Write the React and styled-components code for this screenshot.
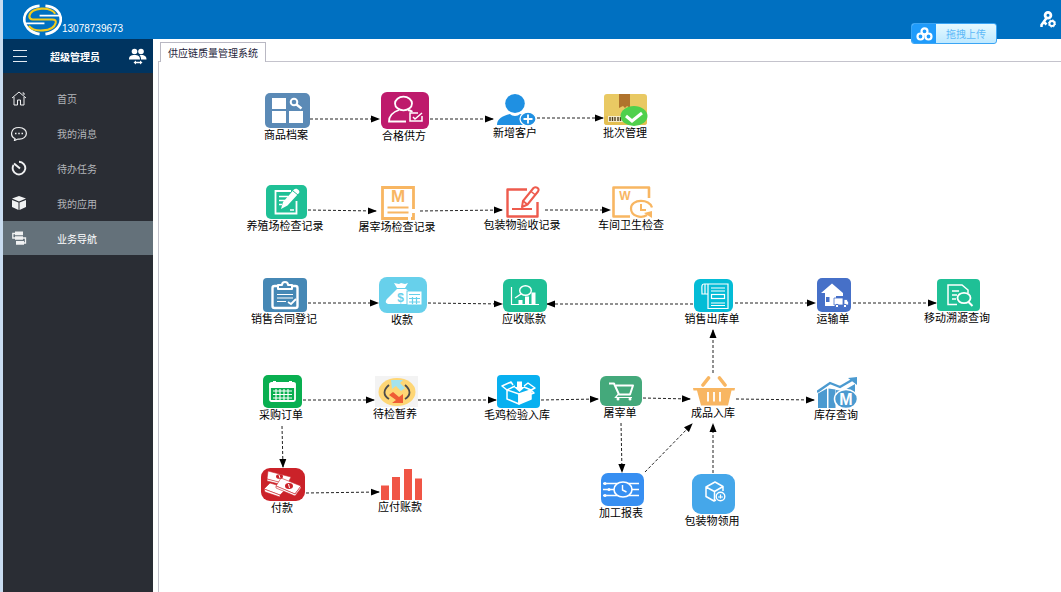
import { useState } from 'react'
import styled, { createGlobalStyle } from 'styled-components'

const FONT = '"Noto Sans CJK SC", "Liberation Sans", sans-serif'

const menu = [
  { id: 'home', name: '首页' },
  { id: 'messages', name: '我的消息' },
  { id: 'todo', name: '待办任务' },
  { id: 'apps', name: '我的应用' },
  { id: 'flow', name: '业务导航' },
]

// x is the middle of the node, y its top edge, w and h the icon size
const nodes = [
  { id: 'goods', label: '商品档案', x: 126, y: 31, w: 45, h: 35 },
  { id: 'supplier', label: '合格供方', x: 244, y: 30, w: 48, h: 37 },
  { id: 'customer', label: '新增客户', x: 355, y: 32, w: 40, h: 32 },
  { id: 'batch', label: '批次管理', x: 465, y: 32, w: 44, h: 32 },
  { id: 'farm', label: '养殖场检查记录', x: 125, y: 123, w: 41, h: 34 },
  { id: 'slaughterCheck', label: '屠宰场检查记录', x: 237, y: 124, w: 34, h: 34 },
  { id: 'packCheck', label: '包装物验收记录', x: 362, y: 124, w: 34, h: 32 },
  { id: 'workshop', label: '车间卫生检查', x: 471, y: 124, w: 41, h: 32 },
  { id: 'contract', label: '销售合同登记', x: 124, y: 216, w: 44, h: 34 },
  { id: 'receipt', label: '收款', x: 242, y: 215, w: 48, h: 36 },
  { id: 'receivable', label: '应收账款', x: 364, y: 217, w: 44, h: 33 },
  { id: 'outbound', label: '销售出库单', x: 552, y: 217, w: 39, h: 33 },
  { id: 'transport', label: '运输单', x: 673, y: 216, w: 34, h: 34 },
  { id: 'trace', label: '移动溯源查询', x: 797, y: 217, w: 43, h: 32 },
  { id: 'purchase', label: '采购订单', x: 121, y: 313, w: 39, h: 33 },
  { id: 'holding', label: '待检暂养', x: 235, y: 314, w: 43, h: 31 },
  { id: 'inbound', label: '毛鸡检验入库', x: 357, y: 313, w: 43, h: 33 },
  { id: 'slaughter', label: '屠宰单', x: 460, y: 314, w: 42, h: 30 },
  { id: 'finished', label: '成品入库', x: 553, y: 314, w: 42, h: 30 },
  { id: 'stock', label: '库存查询', x: 676, y: 315, w: 41, h: 31 },
  { id: 'payment', label: '付款', x: 122, y: 406, w: 44, h: 33 },
  { id: 'payable', label: '应付账款', x: 240, y: 406, w: 41, h: 32 },
  { id: 'report', label: '加工报表', x: 461, y: 411, w: 43, h: 33 },
  { id: 'packUse', label: '包装物领用', x: 552, y: 412, w: 43, h: 40 },
]

// x1, y1, x2, y2 with the arrow head at the second point
const edges = [
  [150, 57, 219, 57],
  [270, 57, 333, 57],
  [377, 56, 443, 56],
  [148, 148, 216, 149],
  [260, 149, 342, 148],
  [385, 148, 450, 148],
  [148, 241, 218, 241],
  [268, 241, 342, 242],
  [533, 242, 387, 242],
  [575, 241, 655, 241],
  [693, 241, 776, 241],
  [143, 338, 214, 338],
  [258, 338, 336, 338],
  [381, 338, 438, 337],
  [483, 336, 530, 337],
  [576, 337, 654, 338],
  [122, 364, 123, 405],
  [146, 431, 219, 430],
  [461, 361, 462, 410],
  [485, 410, 532, 362],
  [553, 311, 553, 268],
  [553, 411, 553, 362],
]

const Tile = ({ w, h, r = 6, fill }) => <rect width={w} height={h} rx={r} fill={fill} />

const art = {
  goods: (
    <>
      <Tile w={45} h={35} r={5} fill="#5b8ab6" />
      <g fill="#fff">
        <rect x="7" y="5" width="14" height="11" />
        <rect x="7" y="18" width="14" height="12" />
        <rect x="24" y="18" width="14" height="12" />
      </g>
      <circle cx="29" cy="9" r="3.3" fill="none" stroke="#fff" strokeWidth="2" />
      <path d="M31.500 11.500l5 4" stroke="#fff" strokeWidth="2.500" />
    </>
  ),
  supplier: (
    <>
      <Tile w={48} h={37} fill="#be1a6c" />
      <g fill="none" stroke="#fff" strokeWidth="1.800">
        <ellipse cx="22.500" cy="11.500" rx="8.500" ry="6.800" />
        <path d="M25 29.500H8c0-6 4-9.500 10-11.500M27 18c2 .4 3 .8 4.500 1.800" />
        <path d="M37 21h-8v8h12v-5" strokeWidth="1.500" />
        <path d="M32 25l2 2 7-6" strokeWidth="1.500" />
      </g>
    </>
  ),
  customer: (
    <>
      <ellipse cx="19" cy="9.500" rx="9.800" ry="9.500" fill="#1f90e2" />
      <path d="M1 31c0-6 5-9 13-11 2 2.500 8 2.500 10 0l6 2v9z" fill="#1f90e2" />
      <ellipse cx="32" cy="25" rx="8" ry="6.800" fill="#1f90e2" stroke="#fff" strokeWidth="1.200" />
      <path d="M27.500 25h9M32 20.500v9" stroke="#fff" strokeWidth="1.800" />
    </>
  ),
  batch: (
    <>
      <rect width="43" height="31" rx="3" fill="#e9c963" />
      <rect y="22" width="43" height="9" rx="3" fill="#e4bf52" />
      <path d="M15 0h11v14l-3-2-2 2-2-2-4 2z" fill="#b0732c" />
      <rect x="4" y="22" width="16" height="6" fill="#f6eccb" />
      <path d="M6 23v4M8.500 23v4M11 23v4M14 23v4M16.500 23v4" stroke="#4b3b20" strokeWidth="1.400" />
      <ellipse cx="30" cy="22" rx="13.500" ry="10" fill="#4fd04c" />
      <path d="M22 22l6 5 10-8" fill="none" stroke="#fff" strokeWidth="3" />
    </>
  ),
  farm: (
    <>
      <Tile w={41} h={34} r={5} fill="#1fc096" />
      <path d="M25 6H9.500v22.500h21V16" fill="none" stroke="#fff" strokeWidth="1.800" />
      <path d="M13 11.500h9M13 15.500h6M13 19.500h3M24 25h4" stroke="#fff" strokeWidth="1.400" />
      <path d="M15 24l2-7L28 4.500c2-2.500 7 1 5 3.500L21.500 20.500z" fill="#fff" />
      <path d="M27 6l5 4" stroke="#1fc096" strokeWidth="1" />
    </>
  ),
  slaughterCheck: (
    <>
      <path d="M32.500 23V1.500h-31v31H27M32.500 27v5.500H30" fill="none" stroke="#f8b662" strokeWidth="2.800" />
      <text x="17" y="16" fontSize="17" fontWeight="700" fontFamily="Liberation Sans" textAnchor="middle" fill="#f8b662">M</text>
      <path d="M6.500 21.500h21M6.500 26.500h21" stroke="#f8b662" strokeWidth="2.200" />
    </>
  ),
  packCheck: (
    <>
      <path d="M21 3.500H1.500v27h30V16" fill="none" stroke="#ee5b4d" strokeWidth="2.400" strokeLinejoin="round" />
      <path d="M6 23h20" stroke="#ee5b4d" strokeWidth="2" />
      <path d="M16 21l1-6L27.500 2c2.500-2 6.500.5 4.500 3.500L21.500 18.500z" fill="#fff" stroke="#ee5b4d" strokeWidth="2" strokeLinejoin="round" />
      <path d="M24.500 5l5 4M17 15l4.500 3.500" stroke="#ee5b4d" strokeWidth="1.600" />
    </>
  ),
  workshop: (
    <>
      <path d="M37 12V1.500H1.500v29H18" fill="none" stroke="#f8b662" strokeWidth="2.600" strokeLinejoin="round" />
      <text x="13" y="14" fontSize="12" fontWeight="700" fontFamily="Liberation Sans" textAnchor="middle" fill="#f8b662">W</text>
      <path d="M35 29c-6 4-16 1-16-6.500 0-10 19-10 21-1" fill="none" stroke="#f8b662" strokeWidth="2.200" />
      <path d="M29 18v6h5" fill="none" stroke="#f8b662" strokeWidth="2" />
      <path d="M32 27l8-2v7z" fill="#f8b662" />
    </>
  ),
  contract: (
    <>
      <Tile w={44} h={34} r={4} fill="#4688b5" />
      <rect x="9.500" y="8" width="25" height="22" rx="2" fill="none" stroke="#fff" strokeWidth="2.400" />
      <path d="M15 11V7h4c0-4 6-4 6 0h4v4z" fill="#4688b5" stroke="#fff" strokeWidth="2" strokeLinejoin="round" />
      <path d="M14 16.500h16M14 20h16M14 23.500h9" stroke="#fff" strokeWidth="1.200" />
      <path d="M25 24l3 2 5-5" fill="none" stroke="#fff" strokeWidth="1.800" />
    </>
  ),
  receipt: (
    <>
      <Tile w={48} h={36} r={8} fill="#67d0eb" />
      <path d="M15 6l5 1 2-1 4 1 3-1-3 5h-8z" fill="#fff" />
      <path d="M18 12h9c4 3 6 6 6 10 0 4-2 5-6 5H9c-3-1-3-3 0-6z" fill="#fff" />
      <text x="21.500" y="24.500" fontSize="12" fontWeight="700" fontFamily="Liberation Sans" textAnchor="middle" fill="#67d0eb">$</text>
      <rect x="28" y="14" width="15" height="14" fill="#fff" stroke="#67d0eb" strokeWidth="1" />
      <path d="M30 17.500h11M30 21.500h11M30 25h11M33.500 20v7M37.500 20v7" stroke="#67d0eb" strokeWidth="1.200" />
    </>
  ),
  receivable: (
    <>
      <Tile w={44} h={33} fill="#1fc096" />
      <path d="M8.500 8v17.500H36" fill="none" stroke="#fff" strokeWidth="1.200" />
      <ellipse cx="22.500" cy="11.500" rx="5.800" ry="4.800" fill="none" stroke="#fff" strokeWidth="1.400" />
      <path d="M18 15l-6 4" stroke="#fff" strokeWidth="1.400" />
      <path d="M15.500 21h4v4h-4zM22 17.500h4V25h-4zM28.500 13.500h4V25h-4z" fill="#fff" />
    </>
  ),
  outbound: (
    <>
      <Tile w={39} h={33} fill="#04bcd6" />
      <g fill="none" stroke="#fff" strokeWidth="1.200">
        <path d="M14 5v24.500h20V5H10c-3 0-2 4-2 10h6" />
        <path d="M17 9h14M17 12h14M17 24h14M17 26.500h14" />
        <rect x="17.500" y="15.500" width="13" height="4" />
        <path d="M11 5v10" />
      </g>
    </>
  ),
  transport: (
    <>
      <Tile w={34} h={34} r={5} fill="#4670c8" />
      <path d="M4 15L15 5.500 26 15v3h-7v10H8V15z" fill="#fff" />
      <rect x="9" y="19" width="3.500" height="5" fill="#4670c8" />
      <path d="M17 20h9v7h-9zM27 21.500h3l1.500 3V27H27z" fill="#fff" stroke="#4670c8" strokeWidth=".8" />
      <circle cx="20" cy="28" r="1.700" fill="#fff" stroke="#4670c8" />
      <circle cx="28" cy="28" r="1.700" fill="#fff" stroke="#4670c8" />
    </>
  ),
  trace: (
    <>
      <Tile w={43} h={32} r={4} fill="#1fc096" />
      <g fill="none" stroke="#fff" strokeWidth="1.500">
        <path d="M20 25.500h-9V6h14l6 5v3" />
        <path d="M15 12h7M15 16h5M15 20h4" />
        <ellipse cx="27" cy="19" rx="6.500" ry="5.200" strokeWidth="1.800" />
        <path d="M31.500 23l4 4" strokeWidth="2" />
      </g>
    </>
  ),
  purchase: (
    <>
      <Tile w={39} h={33} r={5} fill="#09af50" />
      <rect x="7" y="8" width="25" height="18" rx="1.500" fill="none" stroke="#fff" strokeWidth="1.800" />
      <path d="M6.500 8h26v5h-26z" fill="#fff" />
      <path d="M11.500 6v4M27.500 6v4" stroke="#fff" strokeWidth="3" />
      <path d="M10 16h19M10 19.500h19M10 23h19M13 14v11M17 14v11M21 14v11M25 14v11" stroke="#fff" strokeWidth="1.100" />
    </>
  ),
  holding: (
    <>
      <rect width="43" height="31" fill="#f3f3f3" />
      <ellipse cx="22" cy="16" rx="18.500" ry="14" fill="#fed675" />
      <path d="M14 9c-6 5-6 10 0 14M30 9c6 5 6 10 0 14" fill="none" stroke="#4b4b4b" strokeWidth="1.800" />
      <path d="M16 4h12l-3 3 5 5-4 3-5-5-4 3z" fill="#a4e3ee" />
      <path d="M14 19l4-3 6 5 4-3v9H17l4-3z" fill="#ef5c35" />
    </>
  ),
  inbound: (
    <>
      <Tile w={43} h={33} r={4} fill="#08b0f0" />
      <g fill="none" stroke="#fff" strokeWidth="1.500" strokeLinejoin="round">
        <path d="M10 15v9l12 5V19z" />
        <path d="M22 19l12-4v9l-12 5z" fill="#fff" />
        <path d="M10 15l-5-4 9-4 2 3M34 15l4-2-7-5-4 3M10 15l8-4M34 15l-7-3M22 19l3 3 12-4-3-3" />
      </g>
      <path d="M20 6.500h5V12h3l-5.500 5-5.500-5h3z" fill="#fff" />
    </>
  ),
  slaughter: (
    <>
      <Tile w={42} h={30} r={6} fill="#44a97b" />
      <path d="M9 7.500h5l5 11h11l3-9H16" fill="none" stroke="#fff" strokeWidth="2" strokeLinejoin="round" />
      <path d="M18.500 18l-3 3.500H32" fill="none" stroke="#fff" strokeWidth="1.200" />
      <circle cx="18" cy="23" r="1.500" fill="#fff" />
      <circle cx="30" cy="23" r="1.500" fill="#fff" />
    </>
  ),
  finished: (
    <>
      <path d="M15.500 2L10 9M26.500 2L32 9" stroke="#f8b662" strokeWidth="3.600" strokeLinecap="round" />
      <path d="M0 12h42l-.5 2.500H38.500L35 29.500H8L4 14.500H.5z" fill="#f8b662" />
      <path d="M15 16v9.500M21 16v9.500M27 16v9.500" stroke="#fff" strokeWidth="1.800" />
    </>
  ),
  stock: (
    <>
      <path d="M1 16.500l9-5v19.500H1zM11.500 11.500l7 1v18.500h-7z" fill="#4b9ad0" />
      <path d="M0 15L13 6l10 4 12-7" fill="none" stroke="#4b9ad0" strokeWidth="2.400" />
      <path d="M31 1l9-1v8z" fill="#4b9ad0" />
      <path d="M19 13l7 1 12-7v12H19z" fill="#4b9ad0" />
      <ellipse cx="29" cy="22" rx="11.500" ry="9.500" fill="#4b9ad0" stroke="#fff" strokeWidth="1.500" />
      <text x="29" y="28" fontSize="16" fontWeight="700" fontFamily="Liberation Sans" textAnchor="middle" fill="#fff">M</text>
    </>
  ),
  payment: (
    <>
      <Tile w={44} h={33} r={9} fill="#cb2229" />
      <g fill="#fff" stroke="#cb2229" strokeWidth=".6">
        <path d="M7 3l23 6-4 8-20-6z" />
        <path d="M6 11l20 5v2L6 13z" />
        <path d="M9 15l17 5-7 7-16-6z" />
        <path d="M3 21l16 6v2L4 24z" />
        <path d="M20 10l20 8-6 8-19-8z" />
        <path d="M15 18l19 8 6-8v2l-6 8-19-8z" />
      </g>
      <ellipse cx="18.500" cy="8.500" rx="3.500" ry="2.300" fill="#cb2229" />
      <ellipse cx="28" cy="18" rx="4" ry="3" fill="#cb2229" />
      <path d="M18 7l1 3M27.500 16l1 4" stroke="#fff" strokeWidth="1" />
    </>
  ),
  payable: <path d="M0 17.500h8V32H0zM11 9h8v23h-8zM23 1h8v31h-8zM34 10.500h7V32h-7z" fill="#f05545" />,
  report: (
    <>
      <Tile w={43} h={33} r={7} fill="#378ff2" />
      <path d="M2 10.500h36M2 16.500h36M2 22.500h36" stroke="#fff" strokeWidth="1.400" />
      <g fill="#fff">
        <circle cx="4" cy="10.500" r="1.500" />
        <circle cx="8" cy="16.500" r="1.500" />
        <circle cx="4" cy="22.500" r="1.500" />
      </g>
      <ellipse cx="22" cy="16.500" rx="9" ry="7.500" fill="#378ff2" stroke="#fff" strokeWidth="1.600" />
      <path d="M21.500 12v5l4 2" fill="none" stroke="#fff" strokeWidth="1.400" />
    </>
  ),
  packUse: (
    <>
      <Tile w={43} h={40} r={9} fill="#45a7ea" />
      <g fill="none" stroke="#fff" strokeWidth="1.500" strokeLinejoin="round">
        <path d="M24 26l-2 1-8-4.500V13l9-5 8 4.500V17M14 13l8.500 4.500L31 12.500M22.500 17.500V27" />
      </g>
      <circle cx="28.500" cy="22.500" r="4.300" fill="#45a7ea" stroke="#fff" strokeWidth="1.400" />
      <path d="M26 23h5M28.500 20.500v4" stroke="#fff" strokeWidth="1.200" />
    </>
  ),
}

const menuArt = {
  home: <path d="M1 8l7-6 7 6M3 7v8h3.500v-5h3v5H13V7M11.500 3h1.500v2" fill="none" stroke="currentColor" strokeWidth="1" />,
  messages: (
    <>
      <path d="M4 13.500l-.5 2 3.500-1.500c11 1 11-11.500 1-11.500-9 0-9 9-4 11z" fill="none" stroke="currentColor" strokeWidth="1.200" />
      <path d="M4 8.500h1.500M7.250 8.500h1.500M10.500 8.500H12" stroke="currentColor" strokeWidth="1.600" />
    </>
  ),
  todo: (
    <>
      <path d="M8 1.800A6.300 6.300 0 1 1 2.500 5" fill="none" stroke="currentColor" strokeWidth="1.900" />
      <path d="M3 3.500l6 5" stroke="currentColor" strokeWidth="2" />
    </>
  ),
  apps: (
    <>
      <path d="M8 1l7 2.500L8 6.500 1 3.500z" fill="currentColor" />
      <path d="M1 5l6.500 2.500V15L1 12zM15 5L8.500 7.500V15l6.500-3z" fill="currentColor" />
    </>
  ),
  flow: (
    <>
      <path d="M4 1.500h8v3.800H4zM4 6.300h8v3.500H4zM5 11h8v3.800H5z" fill="currentColor" />
      <path d="M5 3.500H1.800V8H4M12 8h2.500v5H12" fill="none" stroke="currentColor" strokeWidth="1.300" />
    </>
  ),
}

export default function App() {
  const [current, setCurrent] = useState('flow')

  return (
    <>
      <GlobalStyle />
      <Page>
        <Header>
          <Brand href="#home">
            <Logo viewBox="0 0 40 34" aria-hidden="true">
              <g fill="none">
                <path d="M17 2.500C-4 4-4 28 17 31.500M23 2.500c21 1.500 21 25.500 0 29" stroke="#fff" strokeWidth="2.800" />
                <path d="M33 10.500C29 3 8 3.500 6.500 13c0 2.500 1 3.500 3.500 3.500h20c3 0 4 1 3.500 3.500C31 29.500 11 30 6 23" stroke="#f3cb1c" strokeWidth="2.200" />
                <path d="M17 12.500h20M2 20.500h20" stroke="#fff" strokeWidth="1.800" />
              </g>
            </Logo>
            <Phone>13078739673</Phone>
          </Brand>
          <Upload type="button">
            <UploadMark>
              <svg width="17" height="14" viewBox="0 0 17 14" fill="none" stroke="#fff" strokeWidth="2.200" aria-hidden="true">
                <circle cx="8.500" cy="4.300" r="3" />
                <circle cx="4.500" cy="9.500" r="3" />
                <circle cx="12.500" cy="9.500" r="3" />
              </svg>
            </UploadMark>
            <UploadText>拖拽上传</UploadText>
          </Upload>
          <IconButton type="button" aria-label="修改密码">
            <svg width="16" height="17" viewBox="0 0 16 17" fill="none" stroke="#fff" aria-hidden="true">
              <circle cx="8" cy="4.300" r="2.900" strokeWidth="2.800" />
              <path d="M6.500 7L1.500 14v2M4 11l2.500 2.500" strokeWidth="2.500" />
              <circle cx="12" cy="12.500" r="2.500" strokeWidth="1.800" />
              <circle cx="12" cy="12.500" r="3.600" strokeWidth="1" strokeDasharray="1.500 1.300" />
            </svg>
          </IconButton>
        </Header>
        <Body>
          <Sidebar>
            <UserBar>
              <IconButton type="button" aria-label="菜单">
                <svg width="14" height="14" viewBox="0 0 14 14" stroke="#e4ebf2" aria-hidden="true">
                  <path d="M0 1.500h14M0 7.500h14M0 12.500h14" />
                </svg>
              </IconButton>
              <UserName>超级管理员</UserName>
              <IconButton type="button" aria-label="切换用户">
                <svg width="18" height="17" viewBox="0 0 18 17" fill="#fff" aria-hidden="true">
                  <circle cx="5.500" cy="3.500" r="2.800" />
                  <circle cx="12" cy="3.500" r="2.800" />
                  <path d="M0 11.500c0-3.500 2-4.500 5.500-4.500S11 8 11 11.500zM12 11.500c0-2-.5-3.500-1.500-4.500 5-.5 7 1 7 4.500z" />
                  <path d="M4.500 14.500L7 12.500v1.300h4v-1.300l2.500 2-2.500 2v-1.300H7v1.300z" />
                </svg>
              </IconButton>
            </UserBar>
            <Menu>
              {menu.map(x => (
                <MenuItem key={x.id} href={`#${x.id}`} $active={current === x.id} onClick={() => setCurrent(x.id)}>
                  <svg width="16" height="16" viewBox="0 0 16 16" aria-hidden="true">{menuArt[x.id]}</svg>
                  {x.name}
                </MenuItem>
              ))}
            </Menu>
          </Sidebar>
          <Main>
            <Tabs>
              <Tab type="button">供应链质量管理系统</Tab>
            </Tabs>
            <Panel>
              <Canvas>
                <Edges aria-hidden="true">
                  <defs>
                    <marker id="head" markerWidth="9" markerHeight="8" refX="8" refY="4" orient="auto" markerUnits="userSpaceOnUse">
                      <path d="M0 .5L9 4 0 7.500z" fill="#000" />
                    </marker>
                  </defs>
                  {edges.map(([x1, y1, x2, y2]) => (
                    <line key={`${x1}-${y1}-${x2}`} x1={x1} y1={y1} x2={x2} y2={y2} markerEnd="url(#head)" />
                  ))}
                </Edges>
                {nodes.map(n => (
                  <Node key={n.id} type="button" $x={n.x} $y={n.y}>
                    <NodeIcon width={n.w} height={n.h} viewBox={`0 0 ${n.w} ${n.h}`} aria-hidden="true">
                      {art[n.id]}
                    </NodeIcon>
                    <NodeLabel>{n.label}</NodeLabel>
                  </Node>
                ))}
              </Canvas>
            </Panel>
          </Main>
        </Body>
      </Page>
    </>
  )
}

const GlobalStyle = createGlobalStyle`
  * {
    box-sizing: border-box;
  }
  body {
    background: #fff;
    font-family: ${FONT};
    margin: 0;
  }
  button {
    background: none;
    border: 0;
    cursor: pointer;
    font-family: inherit;
    padding: 0;
  }
`
const Page = styled.div`
  border-left: 3px solid #c9dcf0;
  display: flex;
  flex-direction: column;
  min-height: 100vh;
`
const Header = styled.header`
  align-items: center;
  background: #0070c1;
  display: flex;
  height: 39px;
  justify-content: space-between;
  padding: 0 5px 0 20px;
  position: relative;
`
const Brand = styled.a`
  align-items: flex-end;
  color: #fff;
  display: flex;
  text-decoration: none;
`
const Logo = styled.svg`
  height: 34px;
  width: 39px;
`
const Phone = styled.span`
  font-family: "Liberation Sans", sans-serif;
  font-size: 10px;
  line-height: 16px;
`
const Upload = styled.button`
  background: linear-gradient(#e6f9ff, #bfe9ff);
  border: 1px solid #3aa5f5;
  border-radius: 3px;
  display: flex;
  height: 21px;
  overflow: hidden;
  position: absolute;
  right: 64px;
  top: 23px;
  width: 86px;
`
const UploadMark = styled.span`
  align-items: center;
  background: #1f9bfb;
  display: flex;
  height: 100%;
  justify-content: center;
  width: 24px;
`
const UploadText = styled.span`
  color: #5db9f8;
  flex: 1;
  font-size: 10px;
  line-height: 19px;
`
const IconButton = styled.button`
  display: flex;
`
const Body = styled.div`
  display: flex;
  flex: 1;
`
const Sidebar = styled.aside`
  background: #2a2d34;
  flex: none;
  width: 150px;
`
const UserBar = styled.div`
  align-items: center;
  background: #003460;
  display: flex;
  height: 34px;
  padding: 0 6px 0 10px;
`
const UserName = styled.span`
  color: #fff;
  flex: 1;
  font-size: 10px;
  font-weight: bold;
  padding-left: 23px;
`
const Menu = styled.nav`
  padding-top: 8px;
`
const MenuItem = styled.a`
  align-items: center;
  background: ${p => (p.$active ? '#64717a' : 'none')};
  color: ${p => (p.$active ? '#fff' : '#b3b6ba')};
  display: flex;
  font-size: 10px;
  gap: 30px;
  height: 34px;
  padding-left: 8px;
  text-decoration: none;
  & + & {
    margin-top: 1px;
  }
  svg {
    color: #f0f1f2;
  }
`
const Main = styled.main`
  display: flex;
  flex: 1;
  flex-direction: column;
  margin-left: 5px;
  min-width: 0;
  padding-top: 3px;
`
const Tabs = styled.div`
  display: flex;
  padding-left: 2px;
`
const Tab = styled.button`
  background: #fff;
  border: 1px solid #b9b8c3;
  border-bottom: 0;
  color: #23233a;
  font-size: 10px;
  height: 20px;
  line-height: 19px;
  margin-bottom: -1px;
  padding: 0 7px;
  position: relative;
`
const Panel = styled.section`
  border: solid #c4c3cc;
  border-width: 1px 0 0 1px;
  flex: 1;
  padding-left: 1px;
`
const Canvas = styled.div`
  height: 100%;
  min-height: 480px;
  position: relative;
`
const Edges = styled.svg`
  display: block;
  height: 100%;
  left: 0;
  position: absolute;
  top: 0;
  width: 100%;
  line {
    stroke: #222;
    stroke-dasharray: 3 2;
    stroke-width: 1;
  }
`
const Node = styled.button`
  align-items: center;
  display: flex;
  flex-direction: column;
  left: ${p => p.$x - 50}px;
  position: absolute;
  top: ${p => p.$y}px;
  width: 100px;
`
const NodeIcon = styled.svg`
  display: block;
  margin-left: 2px;
`
const NodeLabel = styled.span`
  color: #000;
  font-size: 11px;
  line-height: 12px;
  white-space: nowrap;
`
